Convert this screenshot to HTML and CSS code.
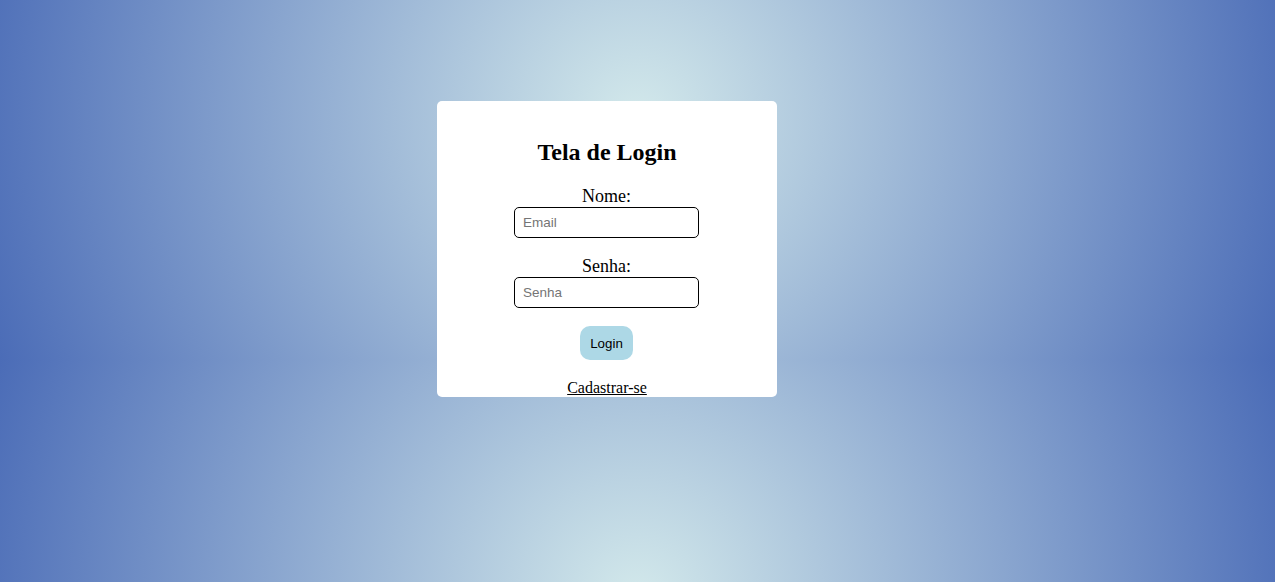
FILE: index.html
```html
<!DOCTYPE html>
<html lang="pt-BR">
<head>
<meta charset="utf-8">
<title>Tela de Login</title>
<link rel="stylesheet" href="styles.css">
</head>
<body>
<main class="page">
  <div class="card">
    <h2 class="title">Tela de Login</h2>
    <form class="form">
      <label class="label" for="nome">Nome:</label>
      <input class="field" id="nome" type="text" placeholder="Email">
      <label class="label" for="senha">Senha:</label>
      <input class="field field-last" id="senha" type="password" placeholder="Senha">
      <button class="btn" type="button">Login</button>
    </form>
    <a class="link" href="#">Cadastrar-se</a>
  </div>
</main>
</body>
</html>
```

FILE: styles.css
```css
html {
  height: 100%;
  background-color: #4b6cb7;
  background-image: radial-gradient(circle, #d3e9eb, #4b6cb7);
  background-size: 100% 480px;
  background-position: 0 -120px;
  background-repeat: repeat-y;
}

body {
  margin: 0;
  font-family: "Liberation Serif", "Times New Roman", serif;
  color: #000;
}

.page {
  padding-top: 101px;
}

.card {
  box-sizing: border-box;
  width: 340px;
  height: 296px;
  margin-left: calc(50% - 200.5px);
  padding-top: 18px;
  background: #fff;
  border-radius: 5px;
  display: flex;
  flex-direction: column;
  align-items: center;
  text-align: center;
}

.title {
  font-size: 24px;
  font-weight: bold;
  margin: 20px 0 19px;
}

.form {
  margin: 0 1px 0 0;
  display: flex;
  flex-direction: column;
  align-items: center;
}

.label {
  display: block;
  font-size: 18px;
  line-height: 22px;
}

.field {
  box-sizing: border-box;
  width: 185px;
  height: 31px;
  margin: 0 0 17px;
  padding: 0 8px;
  border: 1px solid #000;
  border-radius: 5px;
  background: #fff;
  font-family: "Liberation Sans", Arial, sans-serif;
  font-size: 13.5px;
  color: #000;
  outline: none;
}

.field-last {
  margin-bottom: 18px;
}

.field::placeholder {
  color: #757575;
}

.btn {
  height: 34px;
  padding: 0 10px;
  border: none;
  border-radius: 10px;
  background: #add8e6;
  color: #000;
  font-family: "Liberation Sans", Arial, sans-serif;
  font-size: 13.33px;
  cursor: pointer;
}

.link {
  display: block;
  margin-top: 19px;
  font-size: 16px;
  color: #000;
  text-decoration: underline;
}
```
